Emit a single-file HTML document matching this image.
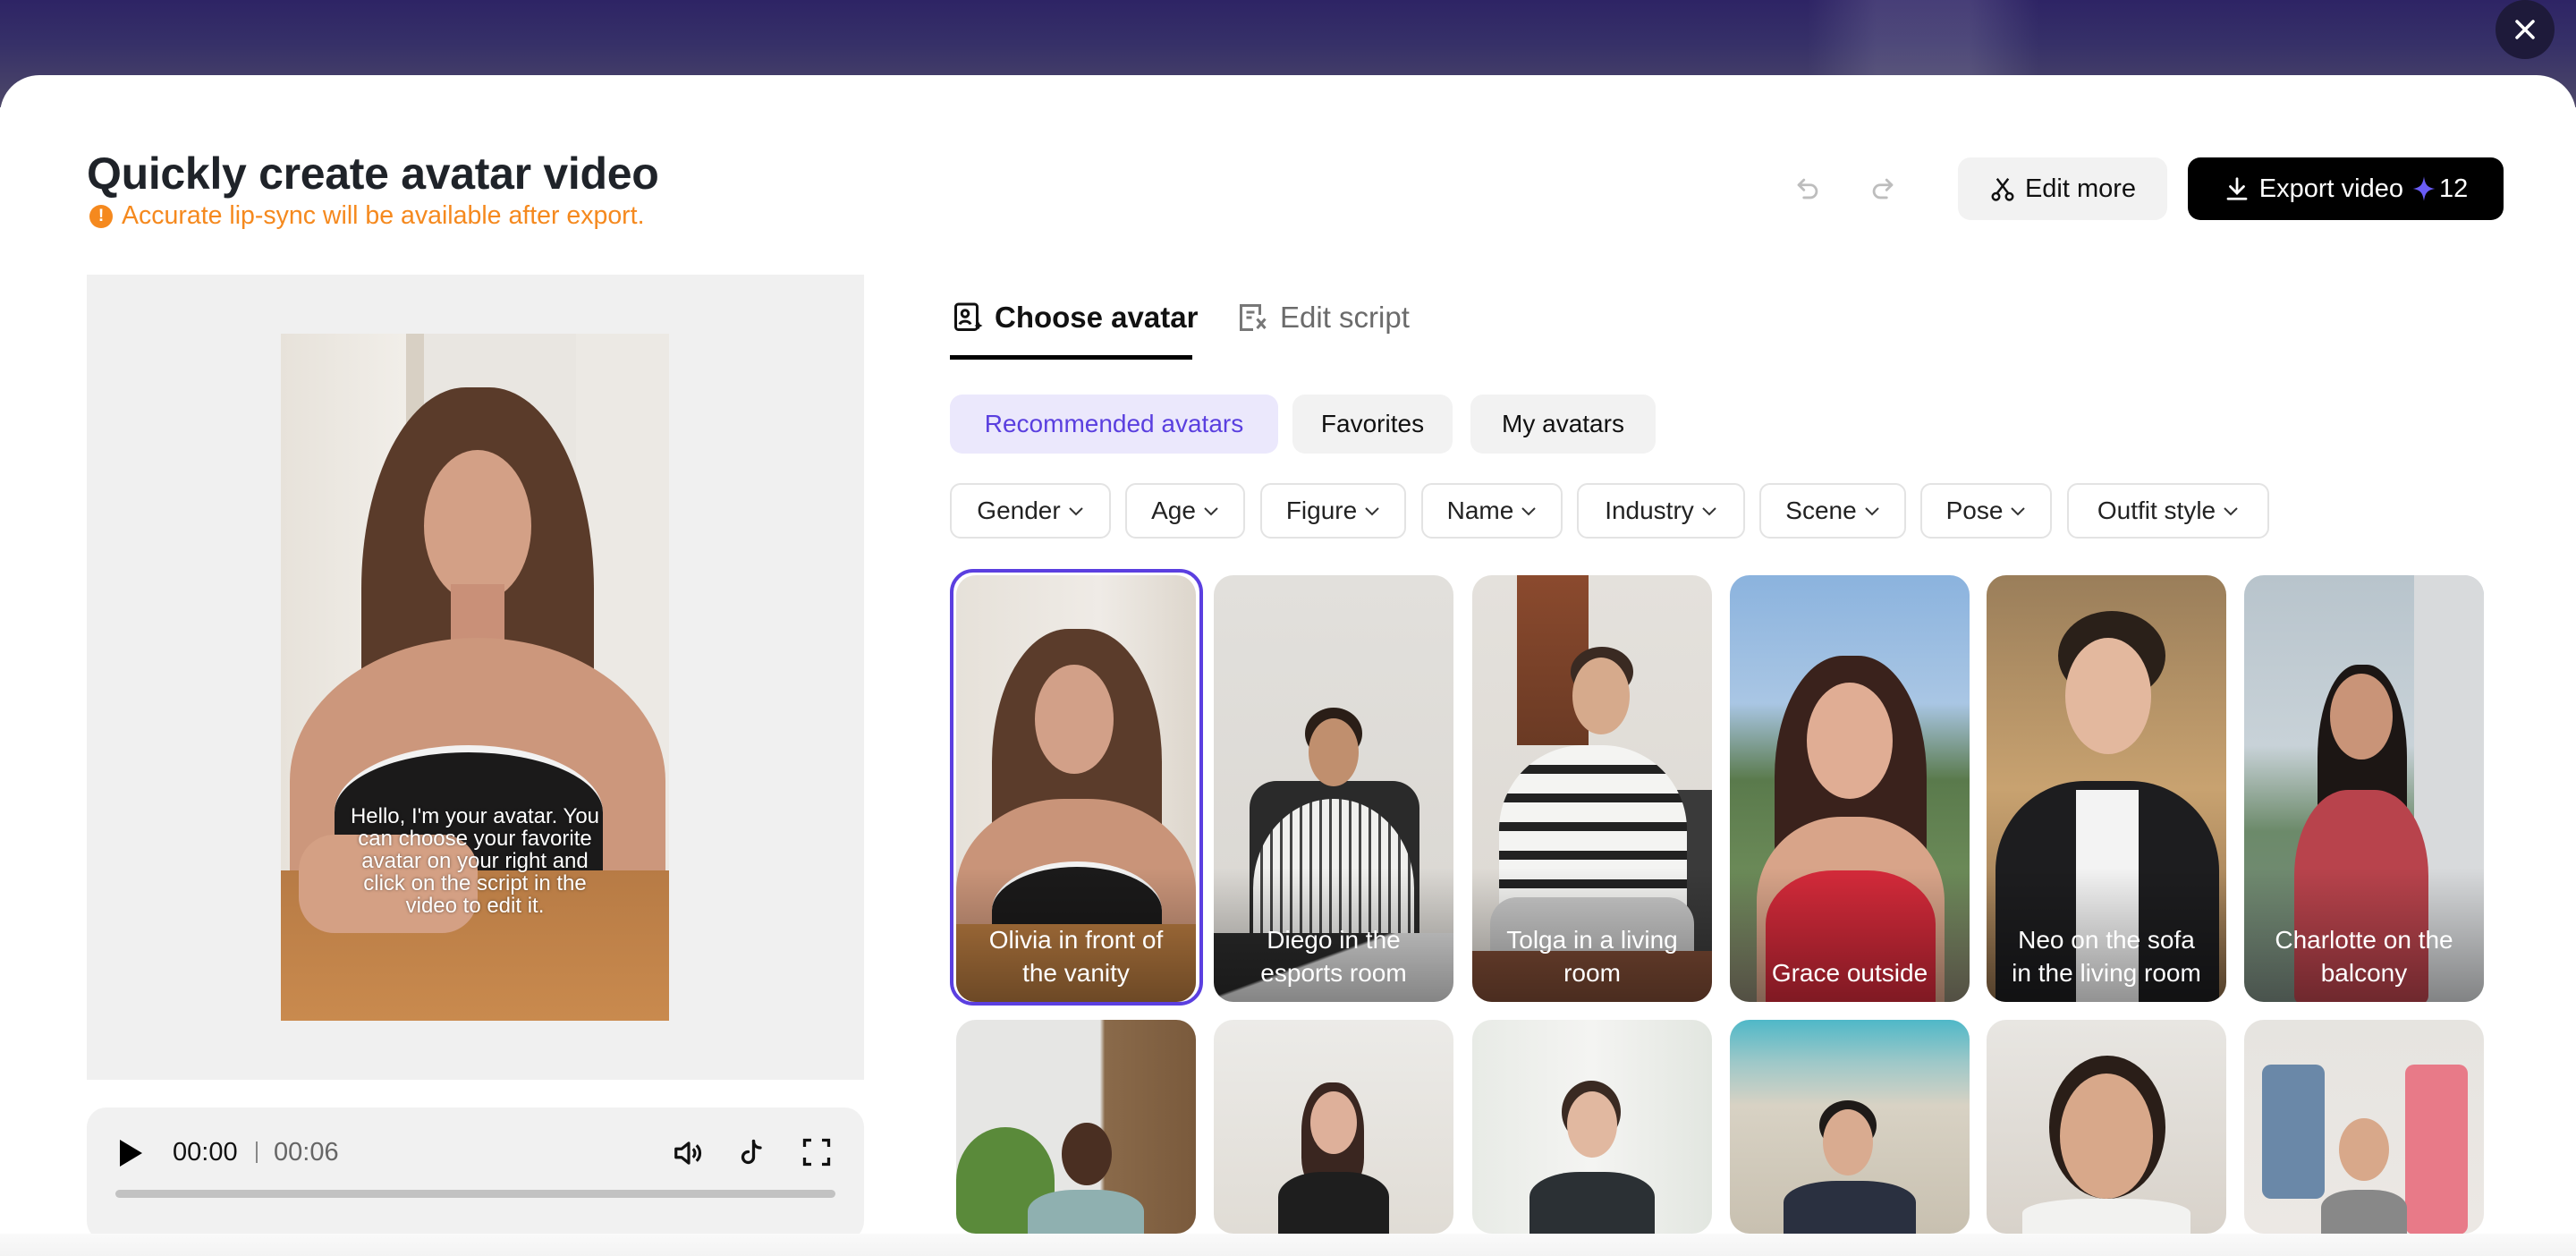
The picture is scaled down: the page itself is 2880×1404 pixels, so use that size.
<!DOCTYPE html>
<html><head><meta charset="utf-8"><style>
*{box-sizing:border-box;margin:0;padding:0}
body{width:2880px;height:1404px;overflow:hidden;position:relative;font-family:"Liberation Sans",sans-serif;background:#fff}
.top{position:absolute;left:0;top:0;width:2880px;height:120px;background:linear-gradient(180deg,#2e2465 0%,#363068 40%,#4d4868 100%)}
.band{position:absolute;left:2020px;top:0;width:260px;height:120px;background:linear-gradient(90deg,rgba(255,255,255,0),rgba(255,255,255,.12) 30%,rgba(255,255,255,.12) 70%,rgba(255,255,255,0))}
.close{position:absolute;left:2790px;top:0;width:66px;height:66px;border-radius:50%;background:#1e1a3a}
.modal{position:absolute;left:0;top:84px;width:2880px;height:1320px;background:#fff;border-radius:44px 44px 0 0}
.abs{position:absolute}
h1{position:absolute;left:97px;top:165px;font-size:50px;font-weight:700;color:#1f2329;letter-spacing:-.3px}
.warn{position:absolute;left:100px;top:225px;font-size:28.5px;color:#f5891e;display:flex;align-items:center}
.warn i{display:inline-block;width:26px;height:26px;border-radius:50%;background:#f5891e;color:#fff;font-style:normal;font-size:19px;font-weight:700;text-align:center;line-height:26px;margin-right:10px}
.btn{position:absolute;top:176px;height:70px;border-radius:14px;display:flex;align-items:center;justify-content:center;font-size:29px;font-weight:500}
.panel{position:absolute;left:97px;top:307px;width:869px;height:900px;background:#f0f0f0}
.video{position:absolute;left:314px;top:373px;width:434px;height:768px;overflow:hidden;background:#e9e6e1}
.ctrl{position:absolute;left:97px;top:1238px;width:869px;height:149px;background:#f1f1f1;border-radius:22px}
.tab{position:absolute;top:336px;font-size:33px;display:flex;align-items:center}
.pill{position:absolute;top:441px;height:66px;border-radius:14px;background:#f2f2f2;font-size:28px;color:#111;display:flex;align-items:center;justify-content:center}
.flt{position:absolute;top:540px;height:62px;border:2px solid #e3e3e3;border-radius:12px;font-size:28px;color:#222;display:flex;align-items:center;justify-content:center}
.flt svg{margin-left:8px}
.card{position:absolute;width:268px;border-radius:22px;overflow:hidden}
.r1{top:643px;height:477px}.r2{top:1140px;height:239px}
.p{position:absolute;border-radius:50%}
.lbl{position:absolute;left:0;right:0;bottom:0;height:150px;background:linear-gradient(180deg,rgba(0,0,0,0),rgba(0,0,0,.4));color:#fff;font-size:28px;line-height:37px;text-align:center;display:flex;align-items:flex-end;justify-content:center;padding:0 10px 14px}
.fade{position:absolute;left:0;top:1379px;width:2880px;height:25px;background:linear-gradient(180deg,#fafafa,#f3f3f3)}
</style></head><body>
<div class="top"></div><div class="band"></div>
<div class="close"><svg width="66" height="66" viewBox="0 0 66 66"><path d="M24 24L42 42M42 24L24 42" stroke="#fff" stroke-width="3.5" stroke-linecap="round"/></svg></div>
<div class="modal"></div>

<h1>Quickly create avatar video</h1>
<div class="warn"><i>!</i>Accurate lip-sync will be available after export.</div>

<svg class="abs" style="left:2004px;top:194px" width="34" height="34" viewBox="0 0 24 24" fill="none" stroke="#bdbdbd" stroke-width="2" stroke-linecap="round" stroke-linejoin="round"><path d="M9 5L5 9l4 4"/><path d="M5 9h9a5 5 0 010 10H9"/></svg>
<svg class="abs" style="left:2088px;top:194px" width="34" height="34" viewBox="0 0 24 24" fill="none" stroke="#bdbdbd" stroke-width="2" stroke-linecap="round" stroke-linejoin="round"><path d="M15 5l4 4-4 4"/><path d="M19 9h-9a5 5 0 000 10h5"/></svg>

<div class="btn" style="left:2189px;width:234px;background:#f2f2f2;color:#111"><svg width="30" height="34" viewBox="0 0 24 24" fill="none" stroke="#111" stroke-width="2" style="margin-right:10px"><path d="M7 3l10 13M17 3L7 16"/><circle cx="6" cy="19" r="3"/><circle cx="18" cy="19" r="3"/></svg>Edit more</div>
<div class="btn" style="left:2446px;width:353px;background:#000;color:#fff"><svg width="30" height="32" viewBox="0 0 24 24" fill="none" stroke="#fff" stroke-width="2.2" stroke-linecap="round" style="margin-right:10px"><path d="M12 3v12M6 10l6 6 6-6M4 21h16"/></svg>Export video <svg width="30" height="34" viewBox="0 0 24 24" style="margin:0 2px 0 8px"><path d="M12 1C13 8 15 11 22 12C15 13 13 16 12 23C11 16 9 13 2 12C9 11 11 8 12 1Z" fill="#6a5cf6"/></svg>12</div>

<div class="panel"></div>
<div class="video">
  <div class="abs" style="left:0;top:0;width:150px;height:768px;background:linear-gradient(90deg,#e7e2da,#f2efea)"></div>
  <div class="abs" style="left:330px;top:0;width:104px;height:768px;background:#ece9e4"></div>
  <div class="abs" style="left:140px;top:0;width:20px;height:500px;background:#d8d0c4"></div>
  <div class="p" style="left:90px;top:60px;width:260px;height:500px;background:#5a3b2a;border-radius:45% 45% 30% 30%"></div>
  <div class="p" style="left:160px;top:130px;width:120px;height:170px;background:#d3a086"></div>
  <div class="abs" style="left:190px;top:280px;width:60px;height:80px;background:#c99078"></div>
  <div class="abs" style="left:10px;top:340px;width:420px;height:320px;background:#cc977c;border-radius:50% 50% 0 0"></div>
  <div class="abs" style="left:60px;top:460px;width:300px;height:150px;background:#1b1a1a;border-radius:50% 50% 10px 10px;border-top:8px solid #f2f2f2"></div>
  <div class="abs" style="left:0;top:600px;width:434px;height:168px;background:linear-gradient(180deg,#b77b45,#c98a4e)"></div>
  <div class="abs" style="left:20px;top:560px;width:200px;height:110px;background:#d4a084;border-radius:40px"></div>
  <div class="abs" style="left:0;top:527px;width:434px;text-align:center;color:#fff;font-size:24px;line-height:25px;text-shadow:0 0 3px rgba(0,0,0,.5)">Hello, I'm your avatar. You<br>can choose your favorite<br>avatar on your right and<br>click on the script in the<br>video to edit it.</div>
</div>
<div class="ctrl">
  <svg class="abs" style="left:34px;top:34px" width="30" height="34" viewBox="0 0 30 34"><path d="M3 2L28 17L3 32Z" fill="#000"/></svg>
  <div class="abs" style="left:96px;top:34px;font-size:29px;color:#111;font-weight:500">00:00</div>
  <div class="abs" style="left:189px;top:38px;width:2px;height:24px;background:#888"></div>
  <div class="abs" style="left:209px;top:34px;font-size:29px;color:#666">00:06</div>
  <svg class="abs" style="left:654px;top:32px" width="38" height="38" viewBox="0 0 24 24" fill="none" stroke="#111" stroke-width="2" stroke-linejoin="round"><path d="M3 9h4l5-4v14l-5-4H3z"/><path d="M15 9a4 4 0 010 6M17.5 6.5a7.5 7.5 0 010 11"/></svg>
  <svg class="abs" style="left:726px;top:32px" width="36" height="38" viewBox="0 0 24 24" fill="none" stroke="#111" stroke-width="2.2" stroke-linecap="round"><path d="M13 3v12a4 4 0 11-4-4"/><path d="M13 3c0 3 2 5 5 5"/></svg>
  <svg class="abs" style="left:798px;top:32px" width="36" height="36" viewBox="0 0 24 24" fill="none" stroke="#111" stroke-width="2.2"><path d="M3 8V3h5M16 3h5v5M21 16v5h-5M8 21H3v-5"/></svg>
  <div class="abs" style="left:32px;top:92px;width:805px;height:9px;border-radius:5px;background:#c2c2c2"></div>
</div>

<div class="tab" style="left:1064px;font-weight:700;color:#111"><svg width="36" height="36" viewBox="0 0 24 24" fill="none" stroke="#111" stroke-width="2" style="margin-right:12px"><rect x="3" y="2" width="16" height="19" rx="2"/><circle cx="10" cy="9" r="2.5"/><path d="M6 17c1-3 7-3 8 0"/><path d="M20 15l1 2 2 1-2 1-1 2-1-2-2-1 2-1z" fill="#111" stroke="none"/></svg>Choose avatar</div>
<div class="abs" style="left:1062px;top:397px;width:271px;height:5px;background:#000"></div>
<div class="tab" style="left:1383px;color:#6b6b6b"><svg width="36" height="36" viewBox="0 0 24 24" fill="none" stroke="#777" stroke-width="2" style="margin-right:12px"><path d="M17 10V3H3v18h9"/><path d="M7 8h6M7 12h4"/><path d="M15 13l6 7M21 13l-6 7"/></svg>Edit script</div>

<div class="pill" style="left:1062px;width:367px;background:#ebe8fc;color:#5a3fdf">Recommended avatars</div>
<div class="pill" style="left:1445px;width:179px;font-weight:500">Favorites</div>
<div class="pill" style="left:1644px;width:207px;font-weight:500">My avatars</div>

<div class="flt" style="left:1062px;width:180px">Gender<svg width="18" height="12" viewBox="0 0 18 12"><path d="M2 3l7 7 7-7" fill="none" stroke="#333" stroke-width="2"/></svg></div>
<div class="flt" style="left:1258px;width:134px">Age<svg width="18" height="12" viewBox="0 0 18 12"><path d="M2 3l7 7 7-7" fill="none" stroke="#333" stroke-width="2"/></svg></div>
<div class="flt" style="left:1409px;width:163px">Figure<svg width="18" height="12" viewBox="0 0 18 12"><path d="M2 3l7 7 7-7" fill="none" stroke="#333" stroke-width="2"/></svg></div>
<div class="flt" style="left:1589px;width:158px">Name<svg width="18" height="12" viewBox="0 0 18 12"><path d="M2 3l7 7 7-7" fill="none" stroke="#333" stroke-width="2"/></svg></div>
<div class="flt" style="left:1763px;width:188px">Industry<svg width="18" height="12" viewBox="0 0 18 12"><path d="M2 3l7 7 7-7" fill="none" stroke="#333" stroke-width="2"/></svg></div>
<div class="flt" style="left:1967px;width:164px">Scene<svg width="18" height="12" viewBox="0 0 18 12"><path d="M2 3l7 7 7-7" fill="none" stroke="#333" stroke-width="2"/></svg></div>
<div class="flt" style="left:2147px;width:147px">Pose<svg width="18" height="12" viewBox="0 0 18 12"><path d="M2 3l7 7 7-7" fill="none" stroke="#333" stroke-width="2"/></svg></div>
<div class="flt" style="left:2311px;width:226px">Outfit style<svg width="18" height="12" viewBox="0 0 18 12"><path d="M2 3l7 7 7-7" fill="none" stroke="#333" stroke-width="2"/></svg></div>

<div class="abs" style="left:1062px;top:636px;width:283px;height:488px;border:4px solid #5b3fe0;border-radius:26px"></div>
<div class="card r1" style="left:1069px;background:linear-gradient(90deg,#e6e1d9,#efebe6 60%,#ddd6cc)">
  <div class="p" style="left:40px;top:60px;width:190px;height:330px;background:#5b3c2b;border-radius:45% 45% 30% 30%"></div>
  <div class="p" style="left:88px;top:100px;width:88px;height:122px;background:#d2a088"></div>
  <div class="abs" style="left:0;top:250px;width:268px;height:230px;background:#c99479;border-radius:45% 45% 0 0"></div>
  <div class="abs" style="left:40px;top:320px;width:190px;height:110px;background:#1b1a1a;border-radius:50% 50% 10px 10px;border-top:6px solid #f2f2f2"></div>
  <div class="abs" style="left:0;top:390px;width:268px;height:90px;background:#b5793f"></div>
  <div class="lbl">Olivia in front of<br>the vanity</div></div>
<div class="card r1" style="left:1357px;background:linear-gradient(180deg,#e2e0dc,#d9d6d1)">
  <div class="abs" style="left:40px;top:230px;width:190px;height:200px;background:#2a2a2a;border-radius:30px"></div>
  <div class="p" style="left:102px;top:148px;width:64px;height:58px;background:#2a1e17"></div>
  <div class="p" style="left:106px;top:160px;width:56px;height:76px;background:#c08f6e"></div>
  <div class="abs" style="left:44px;top:250px;width:180px;height:200px;border-radius:50% 50% 0 0;background:repeating-linear-gradient(90deg,#f0f0ee 0 8px,#444 8px 11px)"></div>
  <div class="abs" style="left:0;top:400px;width:268px;height:80px;background:linear-gradient(160deg,#2a2a2a 40%,#ddd 42%)"></div>
  <div class="lbl">Diego in the<br>esports room</div></div>
<div class="card r1" style="left:1646px;background:linear-gradient(180deg,#e4e1dc,#dcd8d2)">
  <div class="abs" style="left:50px;top:0;width:80px;height:190px;background:linear-gradient(180deg,#8b4a2e,#6a3a24)"></div>
  <div class="abs" style="left:190px;top:240px;width:78px;height:200px;background:#3a3a3a"></div>
  <div class="p" style="left:110px;top:80px;width:70px;height:56px;background:#3a2a22"></div>
  <div class="p" style="left:112px;top:92px;width:64px;height:86px;background:#d6aa8c"></div>
  <div class="abs" style="left:30px;top:190px;width:210px;height:210px;border-radius:45% 45% 0 0;background:repeating-linear-gradient(180deg,#f4f4f2 0 22px,#222 22px 32px)"></div>
  <div class="abs" style="left:20px;top:360px;width:228px;height:120px;background:#c8c8c8;border-radius:30px"></div>
  <div class="abs" style="left:0;top:420px;width:268px;height:60px;background:#7c4a34"></div>
  <div class="lbl">Tolga in a living<br>room</div></div>
<div class="card r1" style="left:1934px;background:linear-gradient(180deg,#8bb3de 0%,#a9c6e4 30%,#5a7a4c 48%,#6b8a58 70%,#8a8470 100%)">
  <div class="p" style="left:50px;top:90px;width:170px;height:300px;background:#3a221c;border-radius:45% 45% 30% 30%"></div>
  <div class="p" style="left:86px;top:120px;width:96px;height:130px;background:#e0ad94"></div>
  <div class="abs" style="left:30px;top:270px;width:210px;height:210px;background:#d8a489;border-radius:45% 45% 0 0"></div>
  <div class="abs" style="left:40px;top:330px;width:190px;height:150px;background:#d42a3a;border-radius:40% 40% 0 0"></div>
  <div class="lbl">Grace outside</div></div>
<div class="card r1" style="left:2221px;background:linear-gradient(180deg,#9a7e5a,#c8a270 50%,#8a6a48)">
  <div class="p" style="left:80px;top:40px;width:120px;height:100px;background:#2a2019"></div>
  <div class="p" style="left:88px;top:70px;width:96px;height:130px;background:#e3b89e"></div>
  <div class="abs" style="left:10px;top:230px;width:250px;height:250px;background:#1d1d1f;border-radius:40% 40% 0 0"></div>
  <div class="abs" style="left:100px;top:240px;width:70px;height:240px;background:#f3f3f3"></div>
  <div class="lbl">Neo on the sofa<br>in the living room</div></div>
<div class="card r1" style="left:2509px;background:linear-gradient(180deg,#b8c4cc 0%,#c8d2d8 40%,#6c8a6a 60%,#7a8a80 100%)">
  <div class="abs" style="left:190px;top:0;width:78px;height:480px;background:#d8dadc"></div>
  <div class="p" style="left:82px;top:100px;width:100px;height:230px;background:#1c1614;border-radius:45% 45% 30% 30%"></div>
  <div class="p" style="left:96px;top:110px;width:70px;height:96px;background:#c99478"></div>
  <div class="abs" style="left:56px;top:240px;width:150px;height:240px;background:#b8434c;border-radius:40% 40% 10px 10px"></div>
  <div class="lbl">Charlotte on the<br>balcony</div></div>

<div class="card r2" style="left:1069px;background:linear-gradient(90deg,#e6e6e4 60%,#8a6a4a 62%,#7a5a3c)">
  <div class="abs" style="left:0;top:120px;width:110px;height:119px;background:#5a8a3a;border-radius:50% 50% 0 0"></div>
  <div class="p" style="left:118px;top:115px;width:56px;height:70px;background:#4a2f22"></div>
  <div class="abs" style="left:80px;top:190px;width:130px;height:60px;background:#8fb0b0;border-radius:40% 40% 0 0"></div>
</div>
<div class="card r2" style="left:1357px;background:linear-gradient(180deg,#ecebe8,#e0dcd5)">
  <div class="p" style="left:98px;top:70px;width:70px;height:120px;background:#3a2620;border-radius:45% 45% 30% 30%"></div>
  <div class="p" style="left:108px;top:80px;width:52px;height:70px;background:#deb09a"></div>
  <div class="abs" style="left:72px;top:170px;width:124px;height:70px;background:#1e1e1e;border-radius:40% 40% 0 0"></div>
</div>
<div class="card r2" style="left:1646px;background:linear-gradient(90deg,#e8ebe6,#f4f4f2,#e2e6e0)">
  <div class="p" style="left:100px;top:68px;width:66px;height:70px;background:#3a2a22"></div>
  <div class="p" style="left:106px;top:80px;width:56px;height:74px;background:#e1b8a0"></div>
  <div class="abs" style="left:64px;top:170px;width:140px;height:70px;background:#2b3034;border-radius:40% 40% 0 0"></div>
</div>
<div class="card r2" style="left:1934px;background:linear-gradient(180deg,#4fb8c8 0,#9ec8c8 20%,#d8d2c4 40%,#c8c0b0 100%)">
  <div class="p" style="left:100px;top:90px;width:64px;height:56px;background:#1e1a18"></div>
  <div class="p" style="left:104px;top:100px;width:56px;height:74px;background:#d9ab90"></div>
  <div class="abs" style="left:60px;top:180px;width:148px;height:60px;background:#2a3040;border-radius:40% 40% 0 0"></div>
</div>
<div class="card r2" style="left:2221px;background:linear-gradient(180deg,#e8e6e2,#d8d2ca)">
  <div class="p" style="left:70px;top:40px;width:130px;height:160px;background:#2a1e18"></div>
  <div class="p" style="left:82px;top:60px;width:104px;height:140px;background:#d8a88a"></div>
  <div class="abs" style="left:40px;top:200px;width:188px;height:40px;background:#f2f2f0;border-radius:40% 40% 0 0"></div>
</div>
<div class="card r2" style="left:2509px;background:linear-gradient(180deg,#e6e4e0,#ece8e4)">
  <div class="abs" style="left:20px;top:50px;width:70px;height:150px;background:#6a88a8;border-radius:10px"></div>
  <div class="abs" style="left:180px;top:50px;width:70px;height:190px;background:#e87a88;border-radius:10px"></div>
  <div class="p" style="left:106px;top:110px;width:56px;height:70px;background:#d8a88a"></div>
  <div class="abs" style="left:86px;top:190px;width:96px;height:50px;background:#888;border-radius:40% 40% 0 0"></div>
</div>

<div class="fade"></div>
</body></html>
